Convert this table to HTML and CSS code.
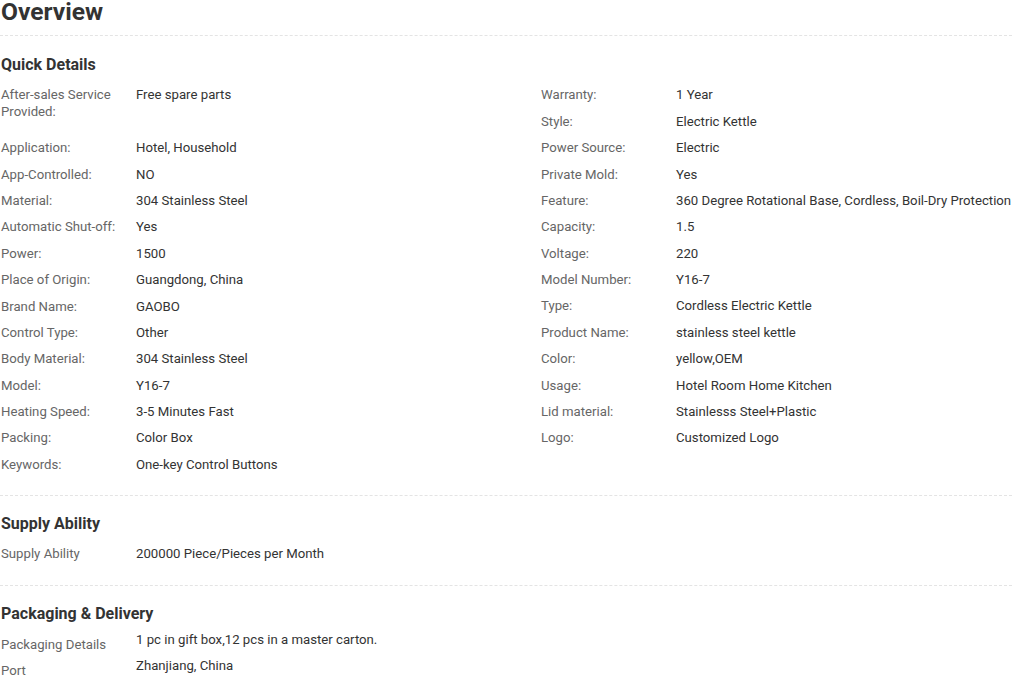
FILE: index.html
```html
<!DOCTYPE html>
<html>
<head>
<meta charset="utf-8">
<link rel="stylesheet" href="styles.css">
</head>
<body>
<div class="page">
  <h1 class="title">Overview</h1>

  <section class="section first">
    <h2 class="section-title">Quick Details</h2>
    <div class="cols">
      <div class="col">
        <div class="item tall"><span class="label">After-sales Service Provided:</span><span class="value">Free spare parts</span></div>
        <div class="item"><span class="label">Application:</span><span class="value">Hotel, Household</span></div>
        <div class="item"><span class="label">App-Controlled:</span><span class="value">NO</span></div>
        <div class="item"><span class="label">Material:</span><span class="value">304 Stainless Steel</span></div>
        <div class="item"><span class="label">Automatic Shut-off:</span><span class="value">Yes</span></div>
        <div class="item"><span class="label">Power:</span><span class="value">1500</span></div>
        <div class="item"><span class="label">Place of Origin:</span><span class="value">Guangdong, China</span></div>
        <div class="item"><span class="label">Brand Name:</span><span class="value">GAOBO</span></div>
        <div class="item"><span class="label">Control Type:</span><span class="value">Other</span></div>
        <div class="item"><span class="label">Body Material:</span><span class="value">304 Stainless Steel</span></div>
        <div class="item"><span class="label">Model:</span><span class="value">Y16-7</span></div>
        <div class="item"><span class="label">Heating Speed:</span><span class="value">3-5 Minutes Fast</span></div>
        <div class="item"><span class="label">Packing:</span><span class="value">Color Box</span></div>
        <div class="item"><span class="label">Keywords:</span><span class="value">One-key Control Buttons</span></div>
      </div>
      <div class="col right">
        <div class="item"><span class="label">Warranty:</span><span class="value">1 Year</span></div>
        <div class="item"><span class="label">Style:</span><span class="value">Electric Kettle</span></div>
        <div class="item"><span class="label">Power Source:</span><span class="value">Electric</span></div>
        <div class="item"><span class="label">Private Mold:</span><span class="value">Yes</span></div>
        <div class="item"><span class="label">Feature:</span><span class="value">360 Degree Rotational Base, Cordless, Boil-Dry Protection</span></div>
        <div class="item"><span class="label">Capacity:</span><span class="value">1.5</span></div>
        <div class="item"><span class="label">Voltage:</span><span class="value">220</span></div>
        <div class="item"><span class="label">Model Number:</span><span class="value">Y16-7</span></div>
        <div class="item"><span class="label">Type:</span><span class="value">Cordless Electric Kettle</span></div>
        <div class="item"><span class="label">Product Name:</span><span class="value">stainless steel kettle</span></div>
        <div class="item"><span class="label">Color:</span><span class="value">yellow,OEM</span></div>
        <div class="item"><span class="label">Usage:</span><span class="value">Hotel Room Home Kitchen</span></div>
        <div class="item"><span class="label">Lid material:</span><span class="value">Stainlesss Steel+Plastic</span></div>
        <div class="item"><span class="label">Logo:</span><span class="value">Customized Logo</span></div>
      </div>
    </div>
  </section>

  <section class="section">
    <h2 class="section-title">Supply Ability</h2>
    <div class="item"><span class="label">Supply Ability</span><span class="value">200000 Piece/Pieces per Month</span></div>
  </section>

  <section class="section last">
    <h2 class="section-title">Packaging &amp; Delivery</h2>
    <div class="item raised"><span class="label">Packaging Details</span><span class="value">1 pc in gift box,12 pcs in a master carton.</span></div>
    <div class="item raised"><span class="label">Port</span><span class="value">Zhanjiang, China</span></div>
  </section>
</div>
</body>
</html>
```

FILE: styles.css
```css
html, body {
  margin: 0;
  padding: 0;
  background: #fff;
}

body {
  font-family: Roboto, "Liberation Sans", Arial, sans-serif;
  color: #333;
  font-size: 13.2px;
}

.page {
  width: 1012px;
}

.title {
  margin: 0;
  padding: 0 0 11px 1px;
  font-size: 24.6px;
  line-height: 24px;
  font-weight: 700;
  color: #333;
  border-bottom: 1px dashed #e4e4e4;
}

.section {
  padding-top: 18px;
  padding-bottom: 18.2px;
  border-bottom: 1px dashed #e4e4e4;
}

.section.first {
  padding-top: 19px;
  padding-bottom: 17.2px;
}

.section.last {
  border-bottom: none;
}

.section-title {
  margin: 0 0 6.8px 0;
  padding-left: 1px;
  font-size: 16px;
  line-height: 20px;
  font-weight: 700;
  color: #333;
}

.cols {
  display: flex;
}

.col {
  width: 540px;
  flex: none;
  display: flex;
  flex-direction: column;
}

.col.right {
  width: auto;
  flex: 1 1 auto;
  min-width: 0;
}

.item {
  display: flex;
  align-items: flex-start;
  line-height: 17px;
  padding: 4.7px 0 4.7px 1px;
}

.item.tall {
  height: 52.8px;
  box-sizing: border-box;
}

.label {
  width: 135px;
  flex: none;
  color: #666;
}

.value {
  color: #333;
  white-space: nowrap;
}

.item.raised {
  padding: 0 0 0 1px;
}

.item.raised .label {
  padding: 4.7px 0;
}
```
